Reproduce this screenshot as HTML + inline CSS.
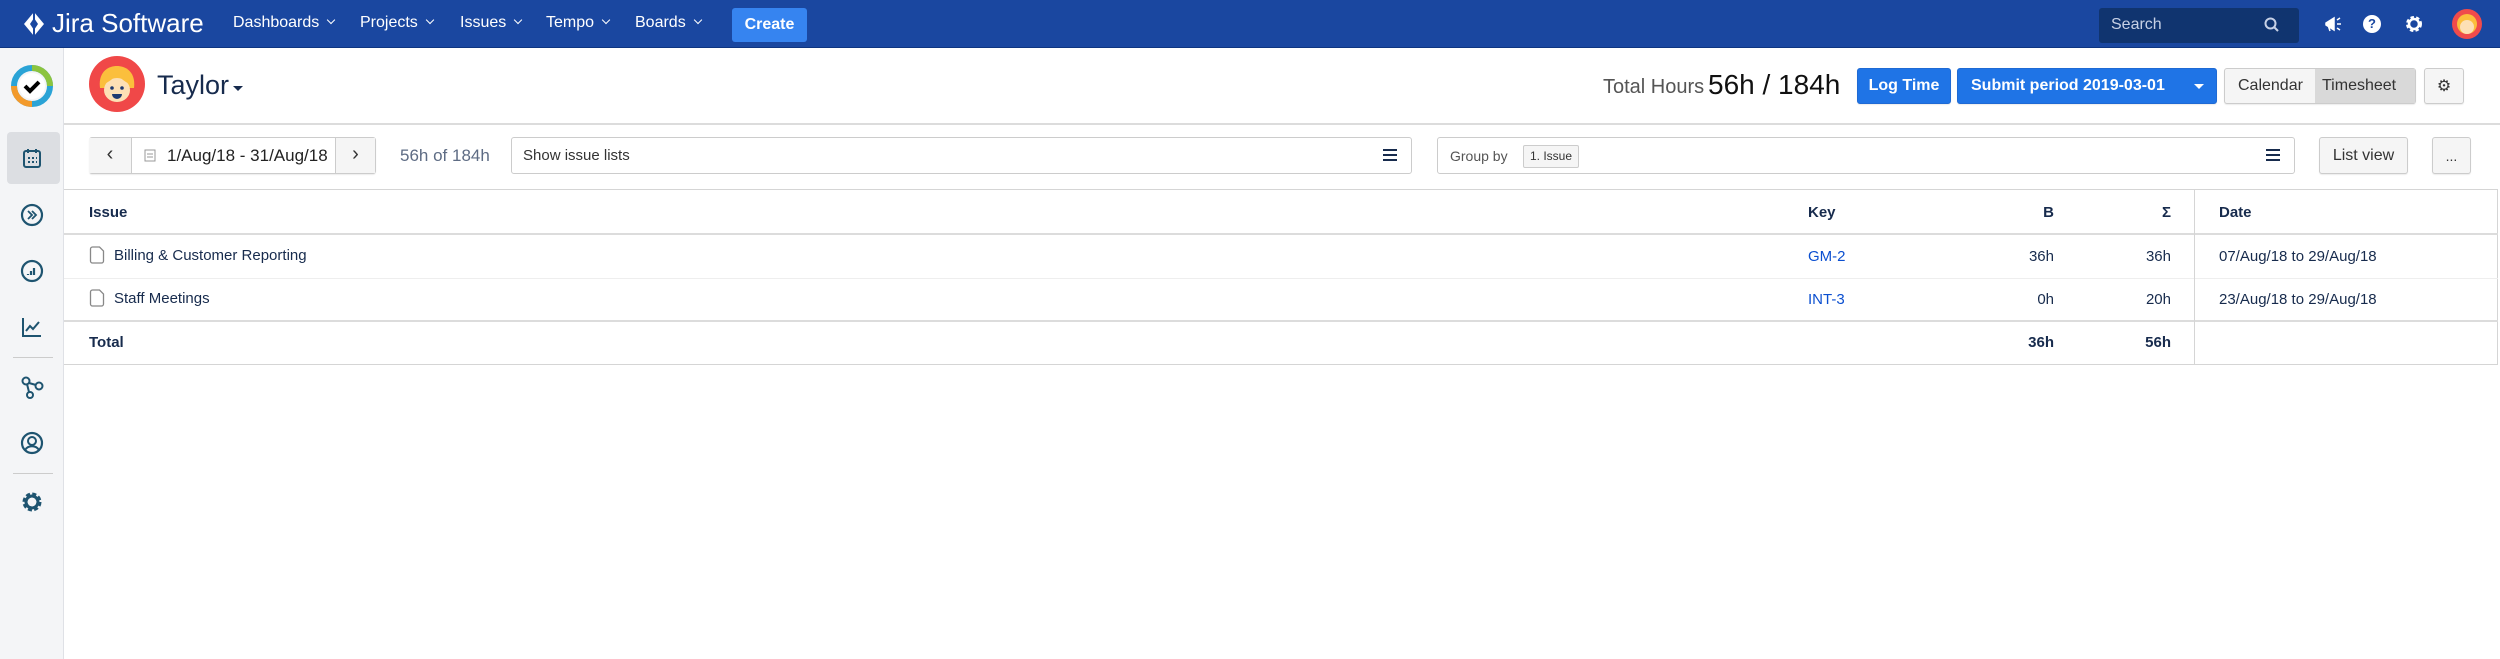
<!DOCTYPE html>
<html><head><meta charset="utf-8"><style>
*{box-sizing:border-box;margin:0;padding:0}
body{width:2500px;height:659px;overflow:hidden;background:#fff;font-family:"Liberation Sans",Arial,sans-serif;color:#172b4d;position:relative}
.a{position:absolute}
.nav{left:0;top:0;width:2500px;height:48px;background:#1a47a0;border-bottom:1px solid #0e3580}
.ni{color:#fff;font-size:16px;top:14px}
.ni:after{content:"";display:inline-block;width:5px;height:5px;border-right:1.6px solid #fff;border-bottom:1.6px solid #fff;transform:rotate(45deg);margin-left:9px;position:relative;top:-4px}
.side{left:0;top:48px;width:64px;height:611px;background:#f4f5f7;border-right:1px solid #dfe1e6}
.btn{border:1px solid #ccc;border-radius:3px;background:#f5f5f5;font-size:16px;color:#333;display:flex;align-items:center;justify-content:center;box-shadow:0 1px 1px rgba(0,0,0,.08)}
.hl{height:2px;background:#dcdcdc}
.t{font-size:15px;color:#172b4d}
.th{font-size:15px;font-weight:bold;color:#172b4d}
.r{text-align:right}
</style></head><body>
<div class="a nav"></div>
<svg class="a" style="left:22px;top:11px" width="24" height="26" viewBox="0 0 24 26"><path d="M12 1 L22 13 L12 25 L2 13 Z" fill="#fff"/><path d="M12 7 L16 13 L12 19 L8 13Z" fill="#1a47a0"/><path d="M12 1 L12 25" stroke="#1a47a0" stroke-width="2"/></svg>
<div class="a" style="left:52px;top:8px;color:#fff;font-size:26px">Jira Software</div>
<div class="a ni" style="left:233px">Dashboards</div>
<div class="a ni" style="left:360px">Projects</div>
<div class="a ni" style="left:460px">Issues</div>
<div class="a ni" style="left:546px">Tempo</div>
<div class="a ni" style="left:635px">Boards</div>
<div class="a" style="left:732px;top:8px;width:75px;height:34px;background:#3684f0;border-radius:3px;color:#fff;font-weight:bold;font-size:16px;text-align:center;line-height:34px">Create</div>
<div class="a" style="left:2099px;top:8px;width:200px;height:35px;background:#10346f;border-radius:3px;color:#c7d1e6;font-size:16px;padding:8px 12px">Search</div>
<svg class="a" style="left:2264px;top:17px" width="16" height="16"><circle cx="6.5" cy="6.5" r="5" fill="none" stroke="#c7d1e6" stroke-width="2"/><path d="M10 10L14 14" stroke="#c7d1e6" stroke-width="2"/></svg>
<svg class="a" style="left:2323px;top:14px" width="20" height="20"><path d="M3 9 L11 4 L11 16 L3 11Z M5 11 L7 17" fill="#fff" stroke="#fff" stroke-width="1.5"/><path d="M14 6l3-2M14 10h4M14 14l3 2" stroke="#fff" stroke-width="1.5"/></svg>
<div class="a" style="left:2363px;top:15px;width:18px;height:18px;border-radius:50%;background:#fff;color:#1a47a0;font-weight:bold;font-size:13px;text-align:center;line-height:18px">?</div>
<svg class="a" style="left:2404px;top:14px" width="20" height="20" viewBox="0 0 20 20"><circle cx="10" cy="10" r="6" fill="none" stroke="#fff" stroke-width="4" stroke-dasharray="3 2"/><circle cx="10" cy="10" r="5" fill="none" stroke="#fff" stroke-width="2.5"/></svg>
<svg class="a" style="left:2452px;top:9px" width="30" height="30"><circle cx="15" cy="15" r="15" fill="#f04b4b"/><circle cx="15" cy="15" r="10" fill="#fbbf3c"/><circle cx="15" cy="18" r="7" fill="#fde0b5"/></svg>

<div class="a side"></div>
<svg class="a" style="left:11px;top:65px" width="42" height="42"><circle cx="21" cy="21" r="18" fill="none" stroke="#2aa3d6" stroke-width="6"/><path d="M21 3 A18 18 0 0 1 39 21" fill="none" stroke="#8cc43f" stroke-width="6"/><path d="M3 21 A18 18 0 0 0 21 39" fill="none" stroke="#f39a2b" stroke-width="6"/><circle cx="21" cy="21" r="13" fill="#fff"/><path d="M14 21l5 5 9-9" fill="none" stroke="#000" stroke-width="4"/></svg>
<div class="a" style="left:7px;top:132px;width:53px;height:52px;background:#dcdee2;border-radius:4px"></div>
<svg class="a" style="left:23px;top:148px" width="18" height="20"><rect x="1" y="3" width="16" height="16" rx="2" fill="none" stroke="#1e5470" stroke-width="2"/><path d="M5 1v4M13 1v4" stroke="#1e5470" stroke-width="2"/><path d="M5 10h2M9 10h2M13 10h1M5 14h2M9 14h2M13 14h1" stroke="#1e5470" stroke-width="2"/></svg>
<svg class="a" style="left:20px;top:203px" width="24" height="24"><circle cx="12" cy="12" r="10" fill="none" stroke="#1e5470" stroke-width="2.2"/><path d="M8 8l4 4-4 4M12 8l4 4-4 4" fill="none" stroke="#1e5470" stroke-width="1.8"/></svg>
<svg class="a" style="left:20px;top:259px" width="24" height="24"><circle cx="12" cy="12" r="10" fill="none" stroke="#1e5470" stroke-width="2.2"/><path d="M8 15v1M11 12v4M14 9v7" stroke="#1e5470" stroke-width="2.2"/></svg>
<svg class="a" style="left:20px;top:315px" width="24" height="24"><path d="M3 3v18h18" fill="none" stroke="#1e5470" stroke-width="2"/><path d="M6 16l4-5 3 3 6-7" fill="none" stroke="#1e5470" stroke-width="2"/></svg>
<div class="a" style="left:13px;top:357px;width:40px;height:1px;background:#ccc"></div>
<svg class="a" style="left:20px;top:375px" width="24" height="24"><circle cx="6" cy="6" r="3.5" fill="none" stroke="#1e5470" stroke-width="2"/><circle cx="19" cy="11" r="3.5" fill="none" stroke="#1e5470" stroke-width="2"/><circle cx="10" cy="20" r="3" fill="none" stroke="#1e5470" stroke-width="2"/><path d="M9 8l7 2M7 9l2 8" stroke="#1e5470" stroke-width="2"/></svg>
<svg class="a" style="left:20px;top:431px" width="24" height="24"><circle cx="12" cy="12" r="10" fill="none" stroke="#1e5470" stroke-width="2.2"/><circle cx="12" cy="10" r="4" fill="none" stroke="#1e5470" stroke-width="2"/><path d="M5 19c3-5 11-5 14 0" fill="none" stroke="#1e5470" stroke-width="2"/></svg>
<div class="a" style="left:13px;top:473px;width:40px;height:1px;background:#ccc"></div>
<svg class="a" style="left:20px;top:490px" width="24" height="24" viewBox="0 0 24 24"><circle cx="12" cy="12" r="7" fill="none" stroke="#1e5470" stroke-width="5" stroke-dasharray="3.5 2"/><circle cx="12" cy="12" r="6" fill="none" stroke="#1e5470" stroke-width="3"/></svg>

<svg class="a" style="left:89px;top:56px" width="56" height="56"><circle cx="28" cy="28" r="28" fill="#f04848"/><path d="M11 32c-2-16 8-22 17-22s19 6 17 22z" fill="#fbbf3c"/><ellipse cx="28" cy="34" rx="13" ry="12" fill="#fde0b5"/><path d="M15 28c5-2 10-6 13-10 3 4 8 8 13 10v-6H15z" fill="#fbbf3c"/><circle cx="23" cy="32" r="1.8" fill="#1e3a70"/><circle cx="33" cy="32" r="1.8" fill="#1e3a70"/><path d="M23 38h10a5 5 0 0 1-10 0z" fill="#1e3a70"/></svg>
<div class="a" style="left:157px;top:70px;font-size:27px;color:#172b4d">Taylor</div>
<div class="a" style="left:233px;top:86px;border:5px solid transparent;border-top:5px solid #172b4d"></div>
<div class="a" style="left:1603px;top:76px;font-size:20px;color:#555">Total Hours</div>
<div class="a" style="left:1708px;top:69px;font-size:28px;color:#111">56h / 184h</div>
<div class="a btn" style="left:1857px;top:68px;width:94px;height:36px;background:#1f74e6;border-color:#1f6ad4;color:#fff;font-weight:bold">Log Time</div>
<div class="a btn" style="left:1957px;top:68px;width:260px;height:36px;background:#1f74e6;border-color:#1f6ad4;color:#fff;font-weight:bold;justify-content:flex-start;padding-left:13px">Submit period 2019-03-01</div>
<div class="a" style="left:2194px;top:84px;border:5px solid transparent;border-top:5px solid #fff"></div>
<div class="a btn" style="left:2224px;top:68px;width:192px;height:36px;justify-content:flex-start;padding-left:13px">Calendar</div>
<div class="a" style="left:2315px;top:69px;width:100px;height:34px;background:#d9d9d9;font-size:16px;color:#333;line-height:34px;padding-left:7px">Timesheet</div>
<div class="a btn" style="left:2424px;top:68px;width:40px;height:36px">⚙</div>
<div class="a hl" style="left:64px;top:123px;width:2436px"></div>

<div class="a btn" style="left:89px;top:137px;width:287px;height:37px;background:#fff"></div>
<div class="a" style="left:89px;top:138px;width:43px;height:35px;background:#f5f5f5;border-right:1px solid #ccc;font-size:20px;text-align:center;line-height:33px;color:#333">‹</div>
<div class="a" style="left:335px;top:138px;width:40px;height:35px;background:#f5f5f5;border-left:1px solid #ccc;font-size:20px;text-align:center;line-height:33px;color:#333">›</div>
<svg class="a" style="left:144px;top:148px" width="12" height="14"><rect x="1" y="2" width="10" height="11" fill="none" stroke="#999"/><path d="M3 6h6M3 9h6" stroke="#999"/></svg>
<div class="a" style="left:167px;top:146px;font-size:17px;color:#222">1/Aug/18 - 31/Aug/18</div>
<div class="a" style="left:400px;top:146px;font-size:17px;color:#5e6c84">56h of 184h</div>
<div class="a" style="left:511px;top:137px;width:901px;height:37px;border:1px solid #ccc;border-radius:3px"></div>
<div class="a" style="left:523px;top:147px;font-size:15px;color:#333">Show issue lists</div>
<div class="a" style="left:1383px;top:149px;width:14px;height:12px;border-top:2px solid #172b4d;border-bottom:2px solid #172b4d"></div><div class="a" style="left:1383px;top:154px;width:14px;height:2px;background:#172b4d"></div>
<div class="a" style="left:1437px;top:137px;width:858px;height:37px;border:1px solid #ccc;border-radius:3px"></div>
<div class="a" style="left:1450px;top:148px;font-size:14px;color:#555">Group by</div>
<div class="a" style="left:1523px;top:145px;width:56px;height:23px;border:1px solid #ccc;border-radius:2px;background:#f5f5f5;font-size:12px;color:#333;line-height:21px;text-align:center">1. Issue</div>
<div class="a" style="left:2266px;top:149px;width:14px;height:12px;border-top:2px solid #172b4d;border-bottom:2px solid #172b4d"></div><div class="a" style="left:2266px;top:154px;width:14px;height:2px;background:#172b4d"></div>
<div class="a btn" style="left:2319px;top:137px;width:89px;height:37px">List view</div>
<div class="a btn" style="left:2432px;top:137px;width:39px;height:37px;font-size:14px">...</div>

<div class="a" style="left:64px;top:189px;width:2434px;height:176px;border:1px solid #d5d5d5;border-left:none"></div>
<div class="a hl" style="left:64px;top:233px;width:2434px"></div>
<div class="a" style="left:64px;top:278px;width:2434px;height:1px;background:#eee"></div>
<div class="a hl" style="left:64px;top:320px;width:2434px"></div>
<div class="a" style="left:2194px;top:189px;width:1px;height:176px;background:#d5d5d5"></div>
<div class="a th" style="left:89px;top:204px">Issue</div>
<div class="a th" style="left:1808px;top:204px">Key</div>
<div class="a th r" style="left:1994px;top:204px;width:60px">B</div>
<div class="a th r" style="left:2111px;top:204px;width:60px">Σ</div>
<div class="a th" style="left:2219px;top:204px">Date</div>
<svg class="a" style="left:89px;top:246px" width="16" height="18"><path d="M1.5 3a2 2 0 0 1 2-2h7l4 4v10a2 2 0 0 1-2 2h-9a2 2 0 0 1-2-2z" fill="none" stroke="#888" stroke-width="1.3"/></svg>
<div class="a t" style="left:114px;top:247px">Billing &amp; Customer Reporting</div>
<div class="a t" style="left:1808px;top:248px;color:#0b4fd0">GM-2</div>
<div class="a t r" style="left:1994px;top:248px;width:60px">36h</div>
<div class="a t r" style="left:2111px;top:248px;width:60px">36h</div>
<div class="a t" style="left:2219px;top:248px">07/Aug/18 to 29/Aug/18</div>
<svg class="a" style="left:89px;top:289px" width="16" height="18"><path d="M1.5 3a2 2 0 0 1 2-2h7l4 4v10a2 2 0 0 1-2 2h-9a2 2 0 0 1-2-2z" fill="none" stroke="#888" stroke-width="1.3"/></svg>
<div class="a t" style="left:114px;top:290px">Staff Meetings</div>
<div class="a t" style="left:1808px;top:291px;color:#0b4fd0">INT-3</div>
<div class="a t r" style="left:1994px;top:291px;width:60px">0h</div>
<div class="a t r" style="left:2111px;top:291px;width:60px">20h</div>
<div class="a t" style="left:2219px;top:291px">23/Aug/18 to 29/Aug/18</div>
<div class="a th" style="left:89px;top:334px">Total</div>
<div class="a th r" style="left:1994px;top:334px;width:60px">36h</div>
<div class="a th r" style="left:2111px;top:334px;width:60px">56h</div>
</body></html>
